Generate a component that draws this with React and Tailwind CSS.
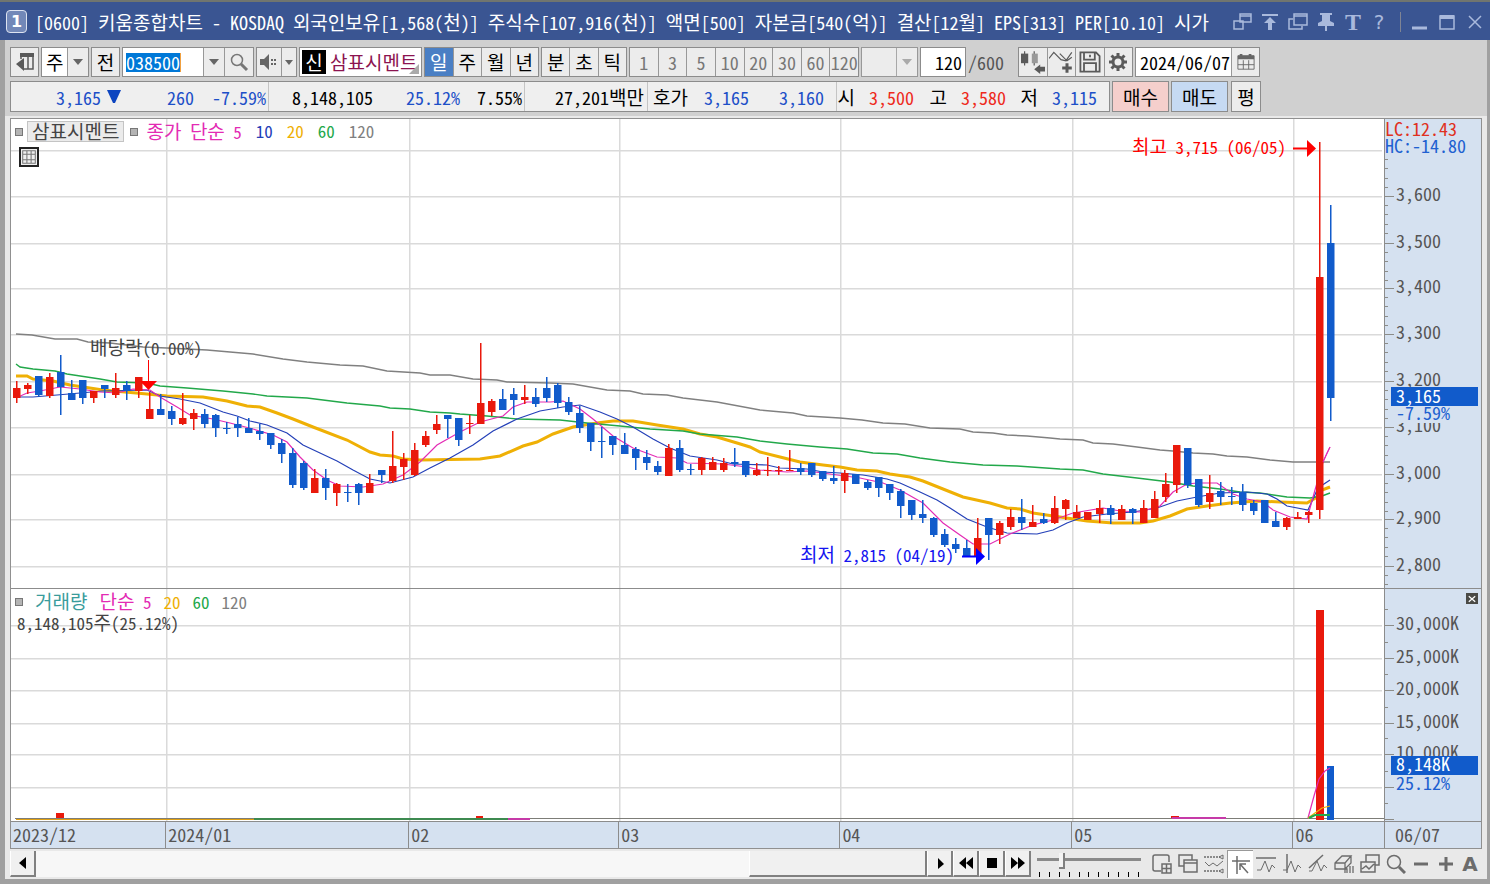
import clsx from "clsx";

// [direction, high, body top, body bottom, low], one entry per trading day
const candles = [
  ["r", 381, 388, 398, 403], ["r", 383, 385, 389, 394], ["b", 376, 376, 395, 397], ["r", 373, 377, 396, 398],
  ["b", 355, 372, 387, 415], ["b", 380, 393, 400, 400], ["b", 380, 380, 398, 404], ["r", 391, 391, 398, 403],
  ["b", 385, 385, 389, 398], ["r", 373, 388, 395, 398], ["b", 381, 385, 391, 400], ["r", 377, 377, 391, 398],
  ["r", 392, 409, 419, 419], ["b", 394, 409, 415, 415], ["b", 406, 411, 419, 425], ["r", 393, 418, 424, 425],
  ["r", 409, 413, 419, 430], ["b", 409, 414, 424, 428], ["b", 414, 415, 428, 437], ["b", 422, 428, 429, 434],
  ["b", 417, 424, 428, 437], ["b", 418, 428, 433, 433], ["b", 424, 431, 434, 440], ["b", 433, 433, 445, 449],
  ["b", 439, 443, 454, 463], ["b", 448, 453, 485, 488], ["b", 461, 463, 488, 490], ["r", 469, 478, 493, 493],
  ["b", 469, 478, 488, 500], ["r", 483, 484, 493, 506], ["b", 484, 492, 493, 502], ["b", 483, 484, 493, 505],
  ["r", 474, 483, 493, 493], ["b", 470, 470, 475, 483], ["r", 431, 466, 481, 483], ["r", 453, 459, 467, 480],
  ["r", 443, 450, 475, 476], ["r", 431, 436, 445, 447], ["r", 415, 424, 430, 434], ["b", 415, 415, 419, 438],
  ["b", 418, 418, 440, 446], ["r", 415, 423, 424, 434], ["r", 343, 403, 424, 424], ["r", 399, 401, 412, 416],
  ["b", 389, 399, 410, 410], ["b", 388, 394, 400, 415], ["r", 385, 397, 400, 404], ["b", 388, 397, 404, 407],
  ["b", 377, 388, 398, 402], ["b", 383, 385, 403, 408], ["b", 397, 402, 412, 415], ["b", 406, 413, 428, 433],
  ["b", 423, 423, 442, 451], ["b", 427, 441, 442, 458], ["b", 436, 436, 445, 455], ["b", 433, 445, 454, 454],
  ["b", 447, 449, 458, 470], ["b", 450, 457, 463, 470], ["b", 461, 466, 472, 475], ["r", 444, 448, 476, 476],
  ["b", 440, 448, 470, 472], ["b", 464, 469, 470, 475], ["r", 457, 458, 470, 475], ["r", 457, 462, 470, 470],
  ["r", 458, 463, 470, 472], ["b", 448, 462, 464, 467], ["b", 461, 461, 475, 477], ["r", 463, 470, 475, 476],
  ["r", 457, 470, 471, 476], ["r", 466, 470, 471, 475], ["r", 450, 470, 471, 471], ["b", 463, 468, 472, 475],
  ["b", 463, 463, 475, 477], ["b", 471, 471, 479, 481], ["b", 466, 478, 481, 484], ["r", 470, 473, 481, 493],
  ["b", 474, 474, 484, 484], ["b", 480, 482, 488, 490], ["b", 477, 477, 488, 497], ["b", 484, 484, 493, 500],
  ["b", 489, 491, 506, 518], ["b", 500, 500, 515, 520], ["b", 500, 514, 518, 523], ["b", 517, 518, 535, 537],
  ["b", 529, 534, 545, 547], ["b", 538, 544, 549, 553], ["b", 540, 548, 556, 556], ["r", 518, 538, 556, 556],
  ["b", 518, 518, 535, 560], ["r", 521, 523, 535, 544], ["r", 509, 517, 527, 530], ["b", 499, 517, 523, 530],
  ["r", 505, 522, 527, 527], ["b", 513, 519, 523, 524], ["r", 496, 508, 523, 524], ["r", 499, 500, 509, 520],
  ["r", 505, 512, 518, 518], ["r", 512, 512, 520, 520], ["r", 500, 508, 514, 523], ["b", 505, 508, 515, 524],
  ["r", 505, 509, 520, 520], ["b", 508, 509, 513, 524], ["r", 500, 508, 523, 523], ["r", 491, 499, 518, 518],
  ["r", 473, 484, 497, 502], ["r", 445, 445, 485, 493], ["b", 448, 448, 485, 488], ["b", 479, 479, 505, 507],
  ["r", 475, 493, 502, 509], ["b", 482, 491, 497, 505], ["b", 487, 496, 497, 505], ["b", 484, 492, 505, 511],
  ["b", 500, 503, 511, 515], ["b", 500, 500, 523, 523], ["b", 512, 521, 527, 527], ["r", 517, 518, 527, 530],
  ["r", 512, 517, 519, 519], ["r", 511, 512, 515, 523], ["r", 142, 277, 510, 519], ["b", 205, 243, 398, 421],
];

const averages = [
  {
    color: "#808080",
    width: 1.4,
    points:
      "16,334 32,335 55,339 77,339 88,342 110,343 143,347 167,348 207,350 230,352 253,354 283,359 307,362 340,365 363,366 387,371 420,373 430,375 450,375 473,379 497,380 507,382 550,383 573,384 607,390 630,391 643,394 667,395 683,398 717,402 760,410 793,413 807,416 840,418 862,420 883,423 905,424 930,428 960,429 973,432 993,433 1007,435 1027,436 1050,438 1060,439 1083,440 1093,443 1113,444 1137,447 1160,450 1173,451 1193,453 1213,454 1227,456 1247,457 1270,460 1293,462 1330,462",
  },
  {
    color: "#efb005",
    width: 3,
    points:
      "16,376 27,376 33,379 53,381 70,385 103,390 147,394 167,396 203,397 227,401 247,406 260,407 277,413 293,419 313,427 347,440 370,452 380,455 393,456 403,459 420,460 480,459 500,456 523,446 537,442 553,434 573,427 597,423 613,421 633,421 657,425 683,429 700,434 717,437 737,443 750,447 760,452 780,457 800,462 823,465 840,467 857,470 877,471 890,474 910,477 923,481 943,489 963,497 990,503 1007,508 1020,509 1033,513 1060,517 1087,521 1113,523 1140,523 1153,521 1170,516 1187,509 1207,506 1230,503 1257,501 1280,502 1307,503 1317,497 1322,490 1330,487",
  },
  {
    color: "#22a84a",
    width: 1.4,
    points:
      "16,364 20,367 33,369 55,371 67,374 100,379 117,382 147,383 160,386 187,388 223,391 253,394 267,396 307,398 347,403 380,406 390,408 410,409 430,412 450,413 460,414 487,416 517,419 560,420 587,423 620,426 650,429 683,431 700,434 737,437 760,441 787,444 820,447 847,449 873,453 897,454 920,458 950,462 983,465 1017,466 1060,469 1083,470 1103,474 1137,478 1170,482 1193,486 1220,489 1240,492 1260,493 1287,497 1310,498 1322,496 1330,493",
  },
  {
    color: "#2440b8",
    width: 1.2,
    points:
      "16,397 33,397 57,395 80,393 103,391 147,390 160,396 180,399 200,403 223,412 237,416 250,421 267,425 287,433 303,445 320,453 337,461 353,470 370,479 390,483 413,477 430,468 450,458 473,445 493,431 517,419 540,411 563,407 580,405 600,412 617,419 633,427 653,439 670,448 690,456 717,460 733,464 767,465 780,468 807,469 823,472 840,473 863,475 887,479 900,483 920,492 937,500 950,508 967,519 987,527 1007,533 1037,534 1053,530 1067,523 1083,517 1107,514 1133,512 1157,508 1177,501 1197,497 1220,493 1247,492 1267,494 1277,499 1287,506 1308,510 1318,488 1330,480",
  },
  {
    color: "#e32bb4",
    width: 1.2,
    points:
      "16,398 27,393 40,391 60,387 80,389 100,392 117,393 133,389 150,390 160,397 177,407 190,415 213,419 230,423 253,429 273,435 287,442 300,457 313,470 327,480 340,486 363,487 383,484 403,475 420,462 437,445 460,432 480,422 503,416 513,407 527,402 550,402 563,401 580,409 593,419 613,436 633,448 657,457 677,458 687,463 723,464 747,467 760,470 787,472 807,471 830,474 860,478 883,483 900,490 923,503 943,523 960,535 973,544 990,544 1010,534 1033,525 1053,520 1073,513 1103,508 1120,511 1140,512 1160,506 1173,492 1187,484 1197,483 1217,483 1233,494 1247,499 1263,502 1273,510 1290,517 1307,519 1315,490 1323,462 1330,447",
  },
];

const RED = "#e9190c";
const BLUE = "#115bcb";
const monthLines = [166, 409, 619, 840, 1072, 1293];
const priceLines = [150, 196, 243, 288, 334, 381, 427, 474, 519, 566];
const priceLabels = ["3,600", "3,500", "3,400", "3,300", "3,200", "3,100", "3,000", "2,900", "2,800"];
const volumeLines = [625, 658, 690, 723, 754, 787];
const volumeLabels = ["30,000K", "25,000K", "20,000K", "15,000K", "10,000K"];

const candleX = (i) => Math.round(16 + i * 11.046);

// Hangul is set one step larger than the half-width latin text around it
function Ko({ children }) {
  return children
    .split(/([가-힣]+)/)
    .map((part, i) => (i % 2 ? <span key={i} className="text-[19px]">{part}</span> : part));
}

function Grid({ lines, top, bottom }) {
  return (
    <g fill="#dadada">
      {monthLines.map((x) => (
        <rect key={x} x={x} y={top} width="1.5" height={bottom - top} />
      ))}
      {lines.map((y) => (
        <rect key={y} x="11" y={y} width="1371" height="1.5" />
      ))}
    </g>
  );
}

function PricePlot() {
  return (
    <svg className="block h-[469px] w-full" viewBox="11 119 1373 469" preserveAspectRatio="none">
      <Grid lines={priceLines} top={119} bottom={588} />
      {averages.map((line) => (
        <polyline key={line.color} points={line.points} fill="none" stroke={line.color} strokeWidth={line.width} />
      ))}
      {candles.map(([dir, high, top, bottom, low], i) => (
        <g key={i} fill={dir === "r" ? RED : BLUE}>
          <rect x={candleX(i)} y={high} width="1.5" height={low - high} />
          <rect x={candleX(i) - 3} y={top} width="7.5" height={Math.max(bottom - top, 1)} />
        </g>
      ))}
      <polyline points="1323,462 1327,453 1330,447" fill="none" stroke="#e32bb4" />
      <path d="M148.500 360V382" stroke="#f00" />
      <path d="M140 381h17l-8.500 9z" fill="#f00" />
      <path d="M1293 148.500h16" stroke="#f00" strokeWidth="2" />
      <path d="M1307 140v17l9-8.500z" fill="#f00" />
      <path d="M962 556.500h16" stroke="#00f" strokeWidth="2" />
      <path d="M976 548v17l9-8.500z" fill="#00f" />
    </svg>
  );
}

function VolumePlot() {
  return (
    <svg className="block h-[232px] w-full" viewBox="11 589 1373 232" preserveAspectRatio="none">
      <Grid lines={volumeLines} top={589} bottom={821} />
      <g shapeRendering="crispEdges">
        <rect x="15" y="818" width="1369" height="1" fill="#7d7d78" />
        <rect x="16" y="819" width="238" height="1" fill="#e0a010" />
        <rect x="254" y="818" width="254" height="2" fill="#3d8a50" />
        <rect x="508" y="818" width="22" height="2" fill="#c63aa8" />
        <rect x="56" y="813" width="8" height="5" fill={RED} />
        <rect x="476" y="816" width="7" height="2" fill={RED} />
        <rect x="1171" y="816" width="8" height="2" fill={RED} />
        <rect x="1172" y="817" width="54" height="2" fill="#c63aa8" />
        <rect x="1316" y="610" width="8" height="210" fill={RED} />
        <rect x="1327" y="766" width="7" height="54" fill={BLUE} />
      </g>
      <g fill="none">
        <path d="M1308 818l6-22 5-17 6-8 5-3" stroke="#e32bb4" strokeWidth="1.200" />
        <path d="M1308 818l7-5 7-5 8-2" stroke="#efb005" strokeWidth="1.200" />
        <path d="M1309 818l6-3h15" stroke="#22a84a" strokeWidth="2" />
      </g>
    </svg>
  );
}

function PriceAxis() {
  return (
    <svg className="block h-[469px] w-[96px]" viewBox="1385 119 96 469">
      <g fill="#8c8c88">
        {priceLines.slice(1).map((y) => (
          <rect key={y} x="1385" y={y} width="9" height="1" />
        ))}
        {priceLines.map((y) =>
          [9, 18, 28, 37].map((d) => y + d < 588 && y + d > 150 && <rect key={y + d} x="1385" y={y + d} width="3" height="1" />)
        )}
      </g>
      <g fill="#555">
        {priceLabels.map((label, i) => (
          <text key={label} x="1396" y={priceLines[i + 1] + 5}>{label}</text>
        ))}
      </g>
      <text x="1385" y="136" fill="#e03020">LC:12.43</text>
      <text x="1385" y="153" fill="#2060d0">HC:-14.80</text>
      <rect x="1395" y="406" width="70" height="17" fill="#d5e1f0" />
      <rect x="1391" y="387" width="87" height="19" fill={BLUE} />
      <text x="1396" y="403" fill="#fff">3,165</text>
      <text x="1396" y="420" fill="#2060d0">-7.59%</text>
    </svg>
  );
}

function VolumeAxis() {
  return (
    <svg className="block h-[232px] w-[96px]" viewBox="1385 589 96 232">
      <g fill="#8c8c88">
        {[...volumeLines, 819].map((y) => (
          <g key={y}>
            <rect x="1385" y={y} width="9" height="1" />
            <rect x="1385" y={y - 16} width="3" height="1" />
          </g>
        ))}
      </g>
      <g fill="#555">
        {volumeLabels.map((label, i) => (
          <text key={label} x="1396" y={volumeLines[i] + 5}>{label}</text>
        ))}
      </g>
      <rect x="1391" y="756" width="87" height="19" fill={BLUE} />
      <text x="1396" y="771" fill="#fff">8,148K</text>
      <text x="1396" y="790" fill="#2060d0">25.12%</text>
    </svg>
  );
}

function Icon({ children, size = 20, className }) {
  return (
    <svg
      className={className}
      width={size}
      height={size}
      viewBox="0 0 20 20"
      fill="none"
      stroke="currentColor"
      strokeWidth="1.500"
      aria-hidden="true"
    >
      {children}
    </svg>
  );
}

function Arrow({ className }) {
  return (
    <svg className={className} width="10" height="6" viewBox="0 0 10 6" fill="currentColor" aria-hidden="true">
      <path d="M0 0h10L5 6z" />
    </svg>
  );
}

function ToolButton({ label, className, children }) {
  return (
    <button
      aria-label={label}
      className={clsx("flex h-[30px] shrink-0 items-center justify-center border border-[#8c8c8c] bg-[#ececec]", className)}
    >
      {children}
    </button>
  );
}

function ButtonGroup({ items, active, className }) {
  return (
    <div className={clsx("flex h-[30px] shrink-0 divide-x divide-[#989898] border border-[#8c8c8c] bg-[#ececec]", className)}>
      {items.map((item) => (
        <button key={item} className={clsx("min-w-0 flex-1", item === active && "bg-[#4a7fc4] text-white")}>
          <Ko>{item}</Ko>
        </button>
      ))}
    </div>
  );
}

function TitleBar() {
  return (
    <header className="flex h-[40px] items-center border-t-2 border-[#70756f] bg-[#3a5592] pt-px pr-[5px] pl-1.5 text-white">
      <span className="flex h-[23px] w-[21px] shrink-0 items-center justify-center rounded border border-[#dde3f0] bg-[#7288b8] font-['DejaVu_Sans'] text-base font-bold">
        1
      </span>
      <h1 className="ml-2 w-0 flex-1 overflow-hidden leading-8 whitespace-nowrap">
        <Ko>[0600] 키움종합차트 - KOSDAQ 외국인보유[1,568(천)] 주식수[107,916(천)] 액면[500] 자본금[540(억)] 결산[12월] EPS[313] PER[10.10] 시가</Ko>
      </h1>
      <div className="ml-2 flex items-center gap-2 text-[#a9b9dc]">
        <button aria-label="창 연결"><Icon><path d="M8 2h11v8H8zM8 4h11M2 9h9v8H2z" fill="#3a5592" /></Icon></button>
        <button aria-label="맨 위로"><Icon><path d="M2 3h16" strokeWidth="2" /><path d="M10 5l6 6h-4v7H8v-7H4z" fill="currentColor" stroke="none" /></Icon></button>
        <button aria-label="창 복사"><Icon><path d="M5 7H1v10h13v-3M6 2h13v11H6zM6 4h13" /></Icon></button>
        <button aria-label="고정"><Icon><path d="M4 1h12v2h-2v6l4 2v3h-7v5H9v-5H2v-3l4-2V3H4z" fill="currentColor" stroke="none" /></Icon></button>
        <button aria-label="글꼴" className="w-4.5 font-['Liberation_Serif'] text-2xl leading-5 font-bold">T</button>
        <button aria-label="도움말" className="w-4.5 font-['DejaVu_Sans'] text-xl leading-5">?</button>
        <span className="ml-1 h-5 w-px bg-[#7f8494]" />
        <button aria-label="최소화"><Icon><path d="M3 16h15" strokeWidth="3" /></Icon></button>
        <button aria-label="최대화"><Icon><path d="M3 4h14v13H3z" /><path d="M3 5h14" strokeWidth="4" /></Icon></button>
        <button aria-label="닫기"><Icon><path d="M4 4l12 12M16 4L4 16" /></Icon></button>
      </div>
    </header>
  );
}

function Toolbar() {
  return (
    <div className="flex items-center gap-0.5">
      <ToolButton label="패널 접기" className="w-[29px] text-[#5a5a5a]">
        <Icon>
          <path d="M6 2h12v15H8M13 5v12M6 2v5" />
          <path d="M5 1h14v4H5zM9 6v13L1 12z" fill="currentColor" stroke="none" />
        </Icon>
      </ToolButton>
      <div className="relative h-[30px] w-[48px] shrink-0 border border-[#8c8c8c] bg-white">
        <select aria-label="종목 구분" className="h-full w-full appearance-none pl-1 text-[19px]">
          <option>주</option>
        </select>
        <span className="pointer-events-none absolute inset-y-0 right-0 flex w-[21px] items-center justify-center border-l border-[#989898] bg-[#ececec] text-[#666]">
          <Arrow />
        </span>
      </div>
      <ToolButton className="w-[29px]"><Ko>전</Ko></ToolButton>
      <div className="flex h-[30px] w-[132px] shrink-0 border border-[#8c8c8c] bg-white">
        <div className="flex flex-1 items-center pl-[3px]">
          <input aria-label="종목코드" defaultValue="038500" className="h-[19px] w-[55px] border-r border-[#f0a040] bg-[#0078d7] text-white" />
        </div>
        <button aria-label="종목 목록" className="flex w-[21px] items-center justify-center border-l border-[#989898] bg-[#ececec] text-[#666]"><Arrow /></button>
        <button aria-label="종목 검색" className="flex w-[29px] items-center justify-center border-l border-[#989898] bg-[#ececec] text-[#777]">
          <Icon><circle cx="8" cy="8" r="5.500" /><path d="M12 12l6 6" strokeWidth="3" /></Icon>
        </button>
      </div>
      <div className="flex h-[30px] w-[41px] shrink-0 border border-[#8c8c8c] bg-[#ececec] text-[#666]">
        <button aria-label="소리" className="flex flex-1 items-center justify-center">
          <Icon><path d="M1 7h4l5-5v16l-5-5H1z" fill="currentColor" stroke="none" /><path d="M12 8h2m1 0h2M12 12h2m1 0h2" strokeWidth="2" /></Icon>
        </button>
        <button aria-label="소리 설정" className="flex w-[15px] items-center justify-center border-l border-[#989898]">
          <svg width="8" height="5" viewBox="0 0 8 5" fill="currentColor"><path d="M0 0h8L4 5z" /></svg>
        </button>
      </div>
      <div className="relative flex h-[30px] w-[123px] shrink-0 items-center gap-1 border border-[#8c8c8c] bg-white pl-0.5 text-[19px] whitespace-nowrap">
        <span className="flex h-6 w-6 items-center justify-center bg-black text-white">신</span>
        <span className="text-[#8c1450]">삼표시멘트</span>
        <svg className="absolute right-0.5 bottom-0.5" width="10" height="10" viewBox="0 0 10 10" fill="#aaa"><path d="M10 0v10H0z" /></svg>
      </div>
      <ButtonGroup items={["일", "주", "월", "년"]} active="일" className="w-[115px]" />
      <ButtonGroup items={["분", "초", "틱"]} className="w-[86px]" />
      <ButtonGroup items={["1", "3", "5", "10", "20", "30", "60", "120"]} className="w-[230px] text-[#777]" />
      <div className="relative h-[30px] w-[57px] shrink-0 border border-[#989898] bg-[#ececec]">
        <select aria-label="주기" disabled className="h-full w-full appearance-none" />
        <span className="pointer-events-none absolute inset-y-0 right-0 flex w-[21px] items-center justify-center border-l border-[#a8a8a8] text-[#aaa]">
          <Arrow />
        </span>
      </div>
      <input aria-label="조회 개수" defaultValue="120" className="h-[30px] w-[46px] shrink-0 border border-[#8c8c8c] bg-white pr-[3px] text-right" />
      <span className="mr-3 text-[#555]">/600</span>
      <div className="flex h-[30px] w-[115px] shrink-0 divide-x divide-[#989898] border border-[#8c8c8c] bg-[#ececec] text-[#5a5a5a] *:flex *:flex-1 *:items-center *:justify-center">
        <button aria-label="차트 유형">
          <Icon size={24}><path d="M3 1v12M11 1v12" strokeWidth="1" /><path d="M0 3h6v8H0z" fill="currentColor" stroke="none" /><path d="M9 3h5v8H9z" fill="#999" stroke="none" /><path d="M11 16l5-4v2h4v4h-4v2z" fill="currentColor" stroke="none" /></Icon>
        </button>
        <button aria-label="지표 추가">
          <Icon size={24}><path d="M0 7l4-5 6 6 4 1 5-7M9 3l6 6 4-3" strokeWidth="1" /><path d="M15 11v8M11 15h8" strokeWidth="2.500" /></Icon>
        </button>
        <button aria-label="저장">
          <Icon size={24}><path d="M2 2h13l3 3v13H2zM5 2v6h9V2M5 18v-7h10v7M10 4v2" /></Icon>
        </button>
        <button aria-label="설정">
          <Icon size={20}><circle cx="10" cy="10" r="5" strokeWidth="3" /><path d="M10 1v4M10 15v4M1 10h4M15 10h4M3.500 3.500l3 3M13.500 13.500l3 3M16.500 3.500l-3 3M6.500 13.500l-3 3" strokeWidth="3" /></Icon>
        </button>
      </div>
      <div className="flex h-[30px] w-[125px] shrink-0 border border-[#8c8c8c] bg-white">
        <input aria-label="조회 일자" defaultValue="2024/06/07" className="w-0 flex-1 pl-1" />
        <button aria-label="달력" className="flex w-[28px] items-center justify-center border-l border-[#989898] bg-[#ececec] text-[#666]">
          <Icon size={18}><path d="M1 3h18v15H1zM1 13h18M7 8v10M13 8v10" strokeWidth="1" /><path d="M1 3h18v4H1zM3 1h3v3H3zM13 1h3v3h-3z" fill="currentColor" stroke="none" /></Icon>
        </button>
      </div>
    </div>
  );
}

function QuoteBar() {
  return (
    <div className="flex items-center gap-0.5">
      <div className="flex h-[31px] w-[1100px] shrink-0 items-center border border-[#8c8c8c] bg-[#efefef] whitespace-nowrap *:flex *:h-full *:items-center *:justify-end *:border-r *:border-[#c4c4c4]">
        <div className="w-[258px] pr-0.5 text-[#1d50c8]">
          <span>3,165</span>
          <svg className="ml-1.5" width="14" height="14" viewBox="0 0 14 14" fill="#0d45c0"><path d="M0 0h14L8 13H6z" /></svg>
          <span className="w-[73px] text-right">260</span>
          <span className="w-[72px] text-right">-7.59%</span>
        </div>
        <div className="w-[256px] pr-0.5">
          <span>8,148,105</span>
          <span className="w-[87px] text-right text-[#1d50c8]">25.12%</span>
          <span className="w-[62px] text-right">7.55%</span>
        </div>
        <div className="w-[123px] pr-[3px]"><span><Ko>27,201백만</Ko></span></div>
        <div className="w-[189px] pr-3 text-[#1d50c8]">
          <span className="text-black"><Ko>호가</Ko></span>
          <span className="w-[61px] text-right">3,165</span>
          <span className="w-[75px] text-right">3,160</span>
        </div>
        <div className="flex-1 border-r-0! pr-3 text-[#ee2a1c]">
          <span className="text-black"><Ko>시</Ko></span>
          <span className="w-[59px] text-right">3,500</span>
          <span className="w-[33px] text-right text-black"><Ko>고</Ko></span>
          <span className="w-[59px] text-right">3,580</span>
          <span className="w-[32px] text-right text-black"><Ko>저</Ko></span>
          <span className="w-[59px] text-right text-[#1d50c8]">3,115</span>
        </div>
      </div>
      <button className="h-[31px] w-[57px] border border-[#8c8c8c] bg-[#f5cfcc]"><Ko>매수</Ko></button>
      <button className="h-[31px] w-[57px] border border-[#8c8c8c] bg-[#c6daf3]"><Ko>매도</Ko></button>
      <button className="ml-px h-[31px] w-[30px] border border-[#8c8c8c] bg-[#ececec]"><Ko>평</Ko></button>
    </div>
  );
}

function Square({ className }) {
  return <span className={clsx("h-2 w-2 shrink-0 border border-[#777] bg-[#b4b4b4]", className)} />;
}

function Chart() {
  return (
    <section className="border border-[#909090] bg-white">
      <div className="flex">
        <div className="relative flex-1">
          <PricePlot />
          <div className="absolute top-0.5 left-1 flex items-center text-[17px] leading-[18px]">
            <Square />
            <span className="ml-1 border border-[#c4c4c4] bg-[#ebebeb] px-1 text-[#444]"><Ko>삼표시멘트</Ko></span>
            <Square className="ml-1.5" />
            <div className="ml-2 flex gap-3.5">
              <span className="text-[#e32bb4]"><Ko>종가 단순 5</Ko></span>
              <span className="text-[#2440b8]">10</span>
              <span className="text-[#efb005]">20</span>
              <span className="text-[#22a84a]">60</span>
              <span className="text-[#808080]">120</span>
            </div>
          </div>
          <button aria-label="데이터 표" className="absolute top-7 left-2 flex h-5 w-5 items-center justify-center border-2 border-[#222] bg-[#eee] text-[#777]">
            <Icon size={14}><path d="M1 1h18v18H1zM1 6h18M1 14h18M7 1v18M13 1v18" /></Icon>
          </button>
          <span className="absolute top-[218px] left-[79px] text-[17px] leading-5 text-[#444]"><Ko>배당락(0.00%)</Ko></span>
          <span className="absolute top-[17px] right-[98px] text-[17px] leading-5 text-[#f00]"><Ko>최고 3,715 (06/05)</Ko></span>
          <span className="absolute top-[425px] right-[430px] text-[17px] leading-5 text-[#1414f0]"><Ko>최저 2,815 (04/19)</Ko></span>
        </div>
        <div className="border-l border-[#8c8c8c] bg-[#d5e1f0]">
          <PriceAxis />
        </div>
      </div>
      <div className="flex border-y border-[#8c8c8c]">
        <div className="relative flex-1">
          <VolumePlot />
          <div className="absolute top-0.5 left-1 text-[17px] leading-5">
            <div className="flex items-center gap-3">
              <Square />
              <span className="text-[#3a9c9c]"><Ko>거래량</Ko></span>
              <span className="text-[#e32bb4]"><Ko>단순 5</Ko></span>
              <span className="text-[#efb005]">20</span>
              <span className="text-[#22a84a]">60</span>
              <span className="text-[#808080]">120</span>
            </div>
            <p className="pl-0.5 text-[#444]"><Ko>8,148,105주(25.12%)</Ko></p>
          </div>
        </div>
        <div className="relative border-l border-[#8c8c8c] bg-[#d5e1f0]">
          <VolumeAxis />
          <button aria-label="지표 닫기" className="absolute top-1 right-[3px] flex h-[11px] w-3 items-center justify-center bg-[#4a4a46] text-white">
            <Icon size={8}><path d="M2 3l16 14M18 3L2 17" strokeWidth="3" /></Icon>
          </button>
        </div>
      </div>
      <div className="flex h-[26px] divide-x divide-[#8c8c8c] bg-[#d5e1f0] indent-0.5 leading-6 text-[#555]">
        <span className="w-0 flex-[155]">2023/12</span>
        <span className="w-0 flex-[243]">2024/01</span>
        <span className="w-0 flex-[210]">02</span>
        <span className="w-0 flex-[221]">03</span>
        <span className="w-0 flex-[232]">04</span>
        <span className="w-0 flex-[221]">05</span>
        <span className="w-0 flex-[91]">06</span>
        <span className="w-[96px] pl-2">06/07</span>
      </div>
    </section>
  );
}

function ScrollButton({ label, children }) {
  return (
    <button
      aria-label={label}
      className="flex h-[26px] w-[26px] shrink-0 items-center justify-center border-r-2 border-b-2 border-l border-[#808080] border-l-white bg-[#f0f0f0]"
    >
      <svg width="14" height="14" viewBox="0 0 14 14" fill="#000"><path d={children} /></svg>
    </button>
  );
}

const drawTools = [
  ["차트 추가", <path d="M9 17H3q-2 0-2-2V3q0-2 2-2h12q2 0 2 2v5M10 10h9v9h-9zM10 14.500h9M14.500 10v9" />],
  ["차트 겹치기", <path d="M6 12H1V1h13v5M6 6h13v12H6zM6 9h13" />],
  ["구간 표시", <><path d="M0 3h16M0 17h16" strokeDasharray="2 1" /><path d="M15 3l4-2v4zM15 17l4-2v4zM1 8l4 4 4-3 4 3 6-5" strokeWidth="1" /></>],
  ["십자선", <path d="M1 6h18M6 1v18M9 9l8 9M9 15V9h6" />],
  ["수평선", <><path d="M0 4h20" /><path d="M1 16h4l4-9 4 11 3-7 3 3" strokeWidth="1" /></>],
  ["수직선", <><path d="M5 0v19" /><path d="M1 16h4l4-9 4 11 3-7 3 3" strokeWidth="1" /></>],
  ["추세선", <><path d="M1 14L15 1" /><path d="M1 17h3l5-10 4 10 3-6 3 3" strokeWidth="1" /></>],
  ["전체 지우기", <path d="M1 9l7-7h9l-6 7v6H1zM1 9h10M11 15l6-6V2M11 19v-4h2v4M16 12v7M19 12v7" strokeWidth="1.300" />],
  ["이미지 저장", <path d="M6 8V1h13v10h-4M1 8h14v10H1zM2 15l4-3 3 3 5-5" />],
];

function BottomBar() {
  return (
    <footer className="flex h-[30px] items-center">
      <ScrollButton label="왼쪽으로">M10 1v12L3 7z</ScrollButton>
      <div className="flex h-[26px] flex-1 justify-end bg-[#f7f7f7]">
        <div className="h-full w-[178px] border-r-2 border-b-2 border-l border-[#808080] border-l-white bg-[#f0f0f0]" />
      </div>
      <ScrollButton label="오른쪽으로">M5 2v11l6-5z</ScrollButton>
      <ScrollButton label="뒤로">M7 1v12L0 7zM14 1v12L7 7z</ScrollButton>
      <ScrollButton label="정지">M2 2h10v10H2z</ScrollButton>
      <ScrollButton label="앞으로">M0 1v12l7-6zM7 1v12l7-6z</ScrollButton>
      <div className="ml-1.5 w-[104px]">
        <input
          type="range"
          aria-label="확대 비율"
          defaultValue="22"
          className="block h-4 w-full appearance-none bg-transparent [&::-webkit-slider-runnable-track]:h-[3px] [&::-webkit-slider-runnable-track]:bg-[#8a8a8a] [&::-webkit-slider-thumb]:-mt-[5px] [&::-webkit-slider-thumb]:h-4 [&::-webkit-slider-thumb]:w-[6px] [&::-webkit-slider-thumb]:appearance-none [&::-webkit-slider-thumb]:border-r-2 [&::-webkit-slider-thumb]:border-b-2 [&::-webkit-slider-thumb]:border-[#808080] [&::-webkit-slider-thumb]:bg-[#f4f4f4]"
        />
        <div className="mt-1 flex h-[5px] justify-between px-0.5">
          {Array.from({ length: 11 }, (_, i) => (
            <span key={i} className="w-px bg-black" />
          ))}
        </div>
      </div>
      <div className="ml-2 flex items-center text-[#6c6c6c]">
        {drawTools.map(([label, drawing]) => (
          <button
            key={label}
            aria-label={label}
            className={clsx("flex h-7 w-[26px] items-center justify-center", label === "십자선" && "border-t border-l border-[#999] bg-white")}
          >
            <Icon>{drawing}</Icon>
          </button>
        ))}
        <button aria-label="돋보기" className="flex w-[25px] justify-center"><Icon><circle cx="8" cy="8" r="6.500" /><path d="M13 13l6 6" strokeWidth="3" /></Icon></button>
        <button aria-label="축소" className="flex w-[25px] justify-center"><Icon><path d="M3 10h14" strokeWidth="3" /></Icon></button>
        <button aria-label="확대" className="flex w-[25px] justify-center"><Icon><path d="M3 10h14M10 3v14" strokeWidth="3" /></Icon></button>
        <button className="w-6 font-['DejaVu_Sans'] text-xl leading-5 font-bold">A</button>
      </div>
    </footer>
  );
}

export default function App() {
  return (
    <main className="min-h-screen bg-[#a0a0a0] pb-1 font-['Noto_Sans_Mono_CJK_KR','Noto_Sans_CJK_KR',monospace] text-[18px] leading-5 text-black">
      <TitleBar />
      <div className="mr-[3px] ml-[5px] bg-[#e9e9e9]">
        <div className="space-y-1 bg-[#d0d0d0] px-[5px] pt-[7px] pb-1">
          <Toolbar />
          <QuoteBar />
        </div>
        <div className="px-[5px] pt-0.5">
          <Chart />
          <BottomBar />
        </div>
      </div>
    </main>
  );
}
